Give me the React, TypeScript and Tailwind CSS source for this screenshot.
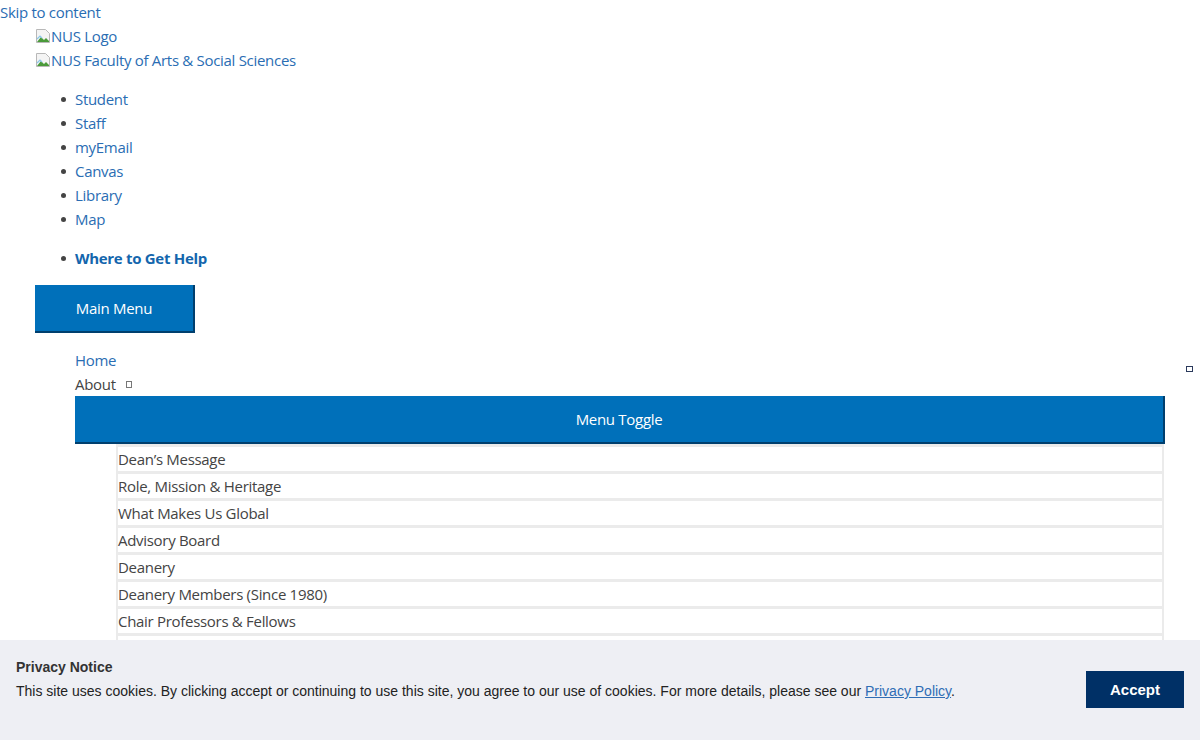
import type { ReactNode } from 'react'

const font = { fontFamily: '"Open Sans", "Noto Sans", sans-serif' }

function BrokenImage({ alt }: { alt: string }) {
  return (
    <div className="flex items-center h-6">
      <svg width="16" height="16" viewBox="0 0 16 16" className="shrink-0">
        <path d="M1.5 1.5h9l4 4v9h-13z" fill="#f4f4f4" stroke="#b8b8b8" />
        <path d="M2 14l4-5 3 3 2-2 3 3v1H2z" fill="#4a9a3a" />
        <path d="M2 11l3-3 2 2" fill="none" stroke="#8cc7e8" strokeWidth="1.2" />
      </svg>
      <span>{alt}</span>
    </div>
  )
}

function Bullet({ children, bold }: { children: ReactNode; bold?: boolean }) {
  return (
    <li className="flex items-center h-6">
      <span className="w-10 flex justify-end pr-[9px]">
        <span className="block w-[5px] h-[5px] rounded-full bg-[#444]" />
      </span>
      <a className={bold ? 'font-bold text-[#1466ad]' : 'text-[#2a6db3]'}>{children}</a>
    </li>
  )
}

const quick = ['Student', 'Staff', 'myEmail', 'Canvas', 'Library', 'Map']
const about = [
  "Dean’s Message",
  'Role, Mission & Heritage',
  'What Makes Us Global',
  'Advisory Board',
  'Deanery',
  'Deanery Members (Since 1980)',
  'Chair Professors & Fellows',
  'Faculty Committees',
  'Facts & Figures',
]

export default function App() {
  return (
    <div className="relative h-[740px] overflow-hidden bg-white text-[15px] leading-6 tracking-[-0.3px] text-[#444]" style={font}>
      <a className="block h-6 text-[#2a6db3]">Skip to content</a>
      <div className="pl-[35px] text-[#2a6db3]">
        <BrokenImage alt="NUS Logo" />
        <BrokenImage alt="NUS Faculty of Arts & Social Sciences" />
      </div>

      <ul className="mt-[15px] pl-[35px]">
        {quick.map(q => (
          <Bullet key={q}>{q}</Bullet>
        ))}
      </ul>
      <ul className="mt-[15px] pl-[35px]">
        <Bullet bold>Where to Get Help</Bullet>
      </ul>

      <div className="mt-[15px] pl-[35px] h-12">
        <button className="w-40 h-12 bg-[#0070ba] text-white border-r-2 border-b-2 border-[#003f6e]">
          Main Menu
        </button>
      </div>

      <div className="mt-[15px] pl-[75px] pr-[35px]">
        <a className="block h-6 text-[#2a6db3]">Home</a>
        <div className="flex items-center h-6">
          <span>About</span>
          <span className="ml-[10px] w-[6px] h-[7px] border border-[#777]" />
        </div>
        <button className="block w-full h-12 bg-[#0070ba] text-white border-r-2 border-b-2 border-[#003f6e]">
          Menu Toggle
        </button>
        <ul className="ml-[41px] mr-[1px] bg-[#ebebeb] pl-[2px] pr-[2px] pt-[3px] flex flex-col gap-[3px]">
          {about.map(a => (
            <li key={a} className="bg-white h-6 leading-6">{a}</li>
          ))}
        </ul>
      </div>

      <span className="absolute left-[1186px] top-[366px] w-[7px] h-[6px] border border-[#2b3a5c] bg-white" />

      <div
        className="absolute left-0 right-0 bottom-0 h-[100px] bg-[#eeeff4] flex items-start justify-between pt-[15px] pl-4 pr-4 text-[#222] tracking-normal"
        style={{ fontFamily: '"Liberation Sans", Arial, sans-serif' }}
      >
        <div className="text-[14px] leading-6">
          <div className="font-bold text-[#333]">Privacy Notice</div>
          <div>
            This site uses cookies. By clicking accept or continuing to use this site, you agree to our use of cookies. For more details, please see our{' '}
            <a className="underline text-[#2f6db5]">Privacy Policy</a>.
          </div>
        </div>
        <button className="mt-4 w-[98px] h-[37px] bg-[#003066] text-white font-bold text-[15px]">
          Accept
        </button>
      </div>
    </div>
  )
}
